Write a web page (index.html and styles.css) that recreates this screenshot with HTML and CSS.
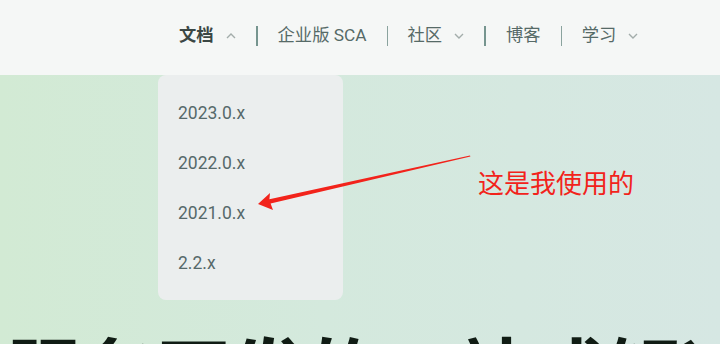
FILE: index.html
```html
<!DOCTYPE html>
<html lang="zh-CN">
<head>
<meta charset="utf-8">
<title>Spring Cloud Alibaba</title>
<link rel="stylesheet" href="styles.css">
</head>
<body>
<div class="page">
  <header class="topbar">
    <nav class="nav">
      <div class="nav-item nav-item--active">
        <span class="nav-label">文档</span>
        <svg class="chev" width="10" height="6" viewBox="0 0 10 6"><path d="M1 5 L5 1 L9 5" fill="none" stroke="#a3adab" stroke-width="1.4"/></svg>
        <ul class="dropdown">
          <li class="dropdown-item">2023.0.x</li>
          <li class="dropdown-item">2022.0.x</li>
          <li class="dropdown-item">2021.0.x</li>
          <li class="dropdown-item">2.2.x</li>
        </ul>
      </div>
      <span class="sep"></span>
      <div class="nav-item"><span class="nav-label">企业版 SCA</span></div>
      <span class="sep sep--thin"></span>
      <div class="nav-item">
        <span class="nav-label">社区</span>
        <svg class="chev" width="10" height="6" viewBox="0 0 10 6"><path d="M1 1 L5 5 L9 1" fill="none" stroke="#a3adab" stroke-width="1.4"/></svg>
      </div>
      <span class="sep"></span>
      <div class="nav-item"><span class="nav-label">博客</span></div>
      <span class="sep sep--thin"></span>
      <div class="nav-item">
        <span class="nav-label">学习</span>
        <svg class="chev" width="10" height="6" viewBox="0 0 10 6"><path d="M1 1 L5 5 L9 1" fill="none" stroke="#a3adab" stroke-width="1.4"/></svg>
      </div>
    </nav>
  </header>
  <main class="hero">
    <h1 class="hero-title">服务开发的一站式解决方案</h1>
  </main>
  <svg class="annot-arrow" width="720" height="344" viewBox="0 0 720 344">
    <polygon points="258,204 270,193 269.4,199.2 470,155.4 470.4,156.6 270.6,203.4 273,210" fill="#f2231b"/>
  </svg>
  <div class="annot-text">这是我使用的</div>
</div>
</body>
</html>
```
FILE: styles.css
```css
* { box-sizing: border-box; }
html, body { margin: 0; padding: 0; }
body {
  width: 720px;
  height: 344px;
  overflow: hidden;
  font-family: Roboto, "Noto Sans CJK SC", sans-serif;
}
.page {
  position: relative;
  width: 720px;
  height: 344px;
  overflow: hidden;
  background: linear-gradient(90deg, #d2ead4 0%, #d4e9dd 45%, #d6e7e3 100%);
}
.topbar {
  height: 75px;
  background: #f5f7f6;
  display: flex;
  align-items: center;
  padding-left: 159px;
  position: relative;
  z-index: 2;
}
.nav {
  display: flex;
  align-items: center;
  height: 100%;
  padding-bottom: 4px;
}
.nav-item {
  position: relative;
  display: flex;
  align-items: center;
  gap: 12px;
  padding: 0 20px;
  height: 100%;
  font-size: 17.3px;
  color: #566a67;
}
.nav-item--active .nav-label {
  font-weight: 700;
  color: #3b4744;
}
.nav-label { line-height: 1; }
.chev { display: block; margin-top: 1px; }
.sep {
  width: 2px;
  height: 20px;
  background: #76958f;
}
.sep--thin { width: 1px; background: #8aa39e; }
.dropdown {
  position: absolute;
  left: -1px;
  top: 75px;
  width: 185px;
  margin: 0;
  padding: 13px 0 12px;
  list-style: none;
  background: #ebeeee;
  border-radius: 8px;
}
.dropdown-item {
  height: 50px;
  line-height: 50px;
  padding-left: 20px;
  font-size: 17.5px;
  color: #56696a;
}
.hero {
  height: 269px;
  position: relative;
}
.hero-title {
  margin: 0;
  padding: 256px 0 0 6px;
  font-family: "Noto Sans CJK SC", sans-serif;
  font-size: 75px;
  line-height: 1;
  font-weight: 700;
  color: #101c14;
  white-space: nowrap;
}
.annot-arrow {
  position: absolute;
  left: 0;
  top: 0;
  z-index: 3;
  pointer-events: none;
}
.annot-text {
  position: absolute;
  left: 478px;
  top: 169px;
  z-index: 3;
  font-family: "Noto Sans CJK SC", sans-serif;
  font-size: 26px;
  line-height: 1;
  color: #f2231b;
}
```
